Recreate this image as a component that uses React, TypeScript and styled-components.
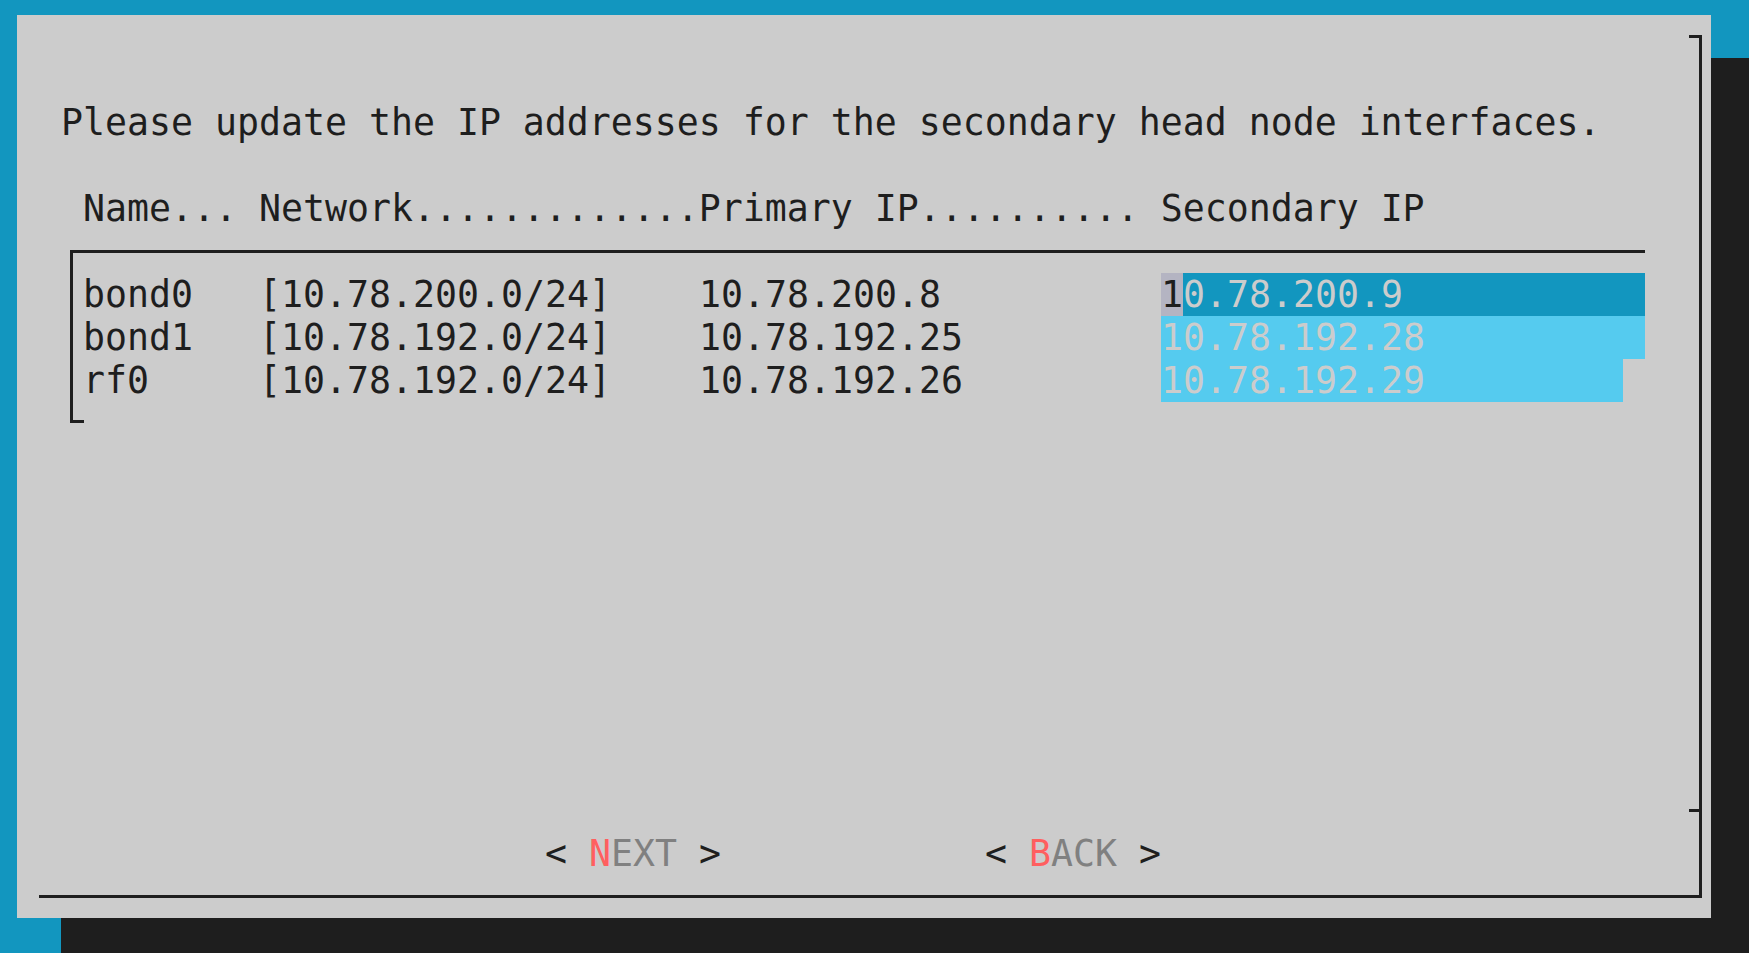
import React from "react";
import styled, { createGlobalStyle } from "styled-components";

const GlobalStyle = createGlobalStyle`
  html, body {
    margin: 0;
    padding: 0;
    background: #1296bf;
  }
`;

const INK = "#1e1e1e";

const Screen = styled.div`
  width: 1749px;
  height: 953px;
  overflow: hidden;
  box-sizing: border-box;
  padding: 15px 0 0 17px;
  background: #1296bf;
  font-family: "DejaVu Sans Mono", monospace;
  font-size: 36.54px;
  line-height: 43px;
  color: ${INK};
`;

const Window = styled.div`
  width: 1694px;
  height: 903px;
  box-sizing: border-box;
  padding: 20px 0 0 22px;
  background: #cccccc;
  box-shadow: 44px 43px 0 0 #1e1e1e;
`;

const Frame = styled.div`
  position: relative;
  width: 1663px;
  height: 863px;
  box-sizing: border-box;
  padding-top: 66px;
  display: flex;
  flex-direction: column;
  border-right: 3px solid ${INK};
  border-bottom: 3px solid ${INK};

  &::before {
    content: "";
    position: absolute;
    top: 0;
    right: -3px;
    width: 13px;
    height: 3px;
    background: ${INK};
  }

  &::after {
    content: "";
    position: absolute;
    top: 774px;
    right: 0;
    width: 10px;
    height: 3px;
    background: ${INK};
  }
`;

const Line = styled.div<{ $indent: number; $gap?: number }>`
  height: 43px;
  white-space: pre;
  padding-left: ${(p) => p.$indent}px;
  margin-top: ${(p) => p.$gap ?? 0}px;
`;

const TableBox = styled.div`
  position: relative;
  margin: 20px 0 0 31px;
  width: 1575px;
  height: 173px;
  box-sizing: border-box;
  padding-top: 20px;
  border-top: 3px solid ${INK};
  border-left: 3px solid ${INK};

  &::after {
    content: "";
    position: absolute;
    left: -3px;
    bottom: 0;
    width: 14px;
    height: 3px;
    background: ${INK};
  }
`;

const DataRow = styled.div`
  display: grid;
  grid-template-columns: 176px 440px 462px auto;
  justify-items: start;
  height: 43px;
  padding-left: 10px;
  white-space: pre;
`;

const Cell = styled.span``;

const Entry = styled.span<{ $cells: number; $active?: boolean }>`
  display: block;
  width: ${(p) => p.$cells * 22}px;
  height: 43px;
  background: ${(p) => (p.$active ? "#1296bf" : "#55cbef")};
  color: #cccccc;
`;

const Cursor = styled.span`
  background: #b4b4c2;
  color: ${INK};
`;

const ButtonBar = styled.div`
  display: flex;
  gap: 264px;
  height: 43px;
  margin-top: auto;
  margin-bottom: 20px;
  padding-left: 506px;
  white-space: pre;
`;

const Button = styled.span``;

const HotKey = styled.span`
  color: #ff5f5f;
`;

const Label = styled.span`
  color: #808080;
`;

const rows = [
  { name: "bond0", net: "[10.78.200.0/24]", primary: "10.78.200.8", secondary: "10.78.200.9", cells: 22, active: true },
  { name: "bond1", net: "[10.78.192.0/24]", primary: "10.78.192.25", secondary: "10.78.192.28", cells: 22 },
  { name: "rf0", net: "[10.78.192.0/24]", primary: "10.78.192.26", secondary: "10.78.192.29", cells: 21 },
];

export default function App() {
  return (
    <>
      <GlobalStyle />
      <Screen>
        <Window>
          <Frame>
            <Line $indent={22}>Please update the IP addresses for the secondary head node interfaces.</Line>
            <Line $indent={44} $gap={43}>
              Name... Network.............Primary IP.......... Secondary IP
            </Line>
            <TableBox>
              {rows.map((r) => (
                <DataRow key={r.name}>
                  <Cell>{r.name}</Cell>
                  <Cell>{r.net}</Cell>
                  <Cell>{r.primary}</Cell>
                  <Entry $cells={r.cells} $active={r.active}>
                    {r.active ? (
                      <>
                        <Cursor>{r.secondary.slice(0, 1)}</Cursor>
                        {r.secondary.slice(1)}
                      </>
                    ) : (
                      r.secondary
                    )}
                  </Entry>
                </DataRow>
              ))}
            </TableBox>
            <ButtonBar>
              <Button>
                {"< "}
                <HotKey>N</HotKey>
                <Label>EXT</Label>
                {" >"}
              </Button>
              <Button>
                {"< "}
                <HotKey>B</HotKey>
                <Label>ACK</Label>
                {" >"}
              </Button>
            </ButtonBar>
          </Frame>
        </Window>
      </Screen>
    </>
  );
}
